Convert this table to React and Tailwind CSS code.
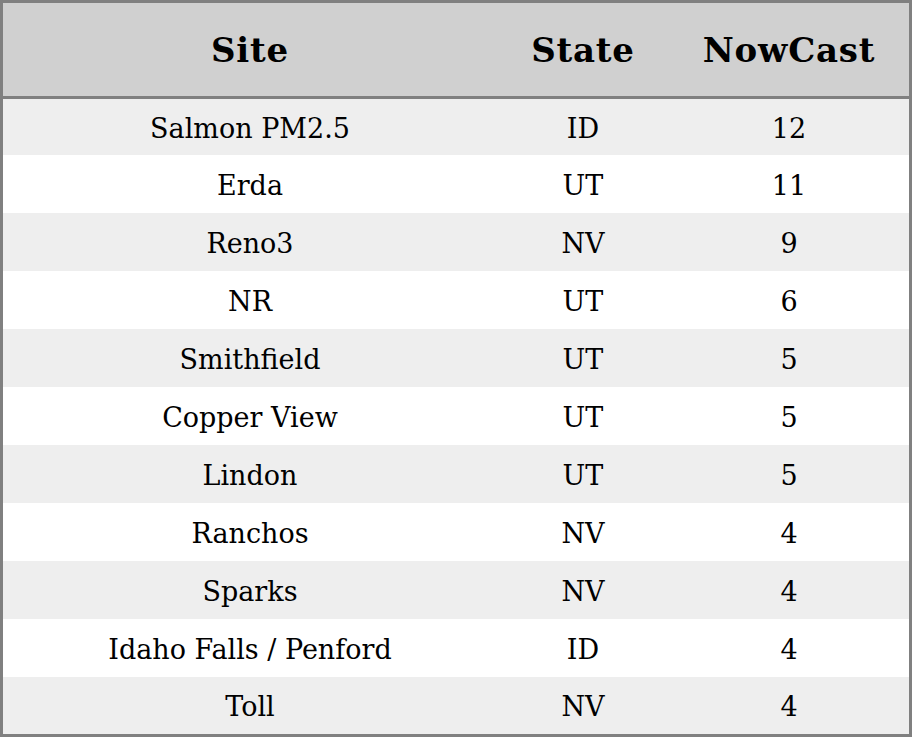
const rows = [
  ["Salmon PM2.5", "ID", "12"],
  ["Erda", "UT", "11"],
  ["Reno3", "NV", "9"],
  ["NR", "UT", "6"],
  ["Smithfield", "UT", "5"],
  ["Copper View", "UT", "5"],
  ["Lindon", "UT", "5"],
  ["Ranchos", "NV", "4"],
  ["Sparks", "NV", "4"],
  ["Idaho Falls / Penford", "ID", "4"],
  ["Toll", "NV", "4"],
];

export default function App() {
  return (
    <div className="w-[912px] h-[737px] bg-white border-[3px] border-[#808080] flex flex-col text-black" style={{ fontFamily: '"DejaVu Serif", serif' }}>
      <div className="h-[93px] shrink-0 grid grid-cols-[494px_172px_1fr] items-center bg-[#d0d0d0] border-b-[3px] border-[#808080] box-content text-[34px] tracking-[0.8px] font-bold leading-none">
        <div className="text-center">Site</div>
        <div className="text-center">State</div>
        <div className="text-center">NowCast</div>
      </div>
      {rows.map((r, i) => (
        <div
          key={i}
          className={
            "grid grid-cols-[494px_172px_1fr] items-center text-[27px] leading-none shrink-0 " +
            (i % 2 === 0 ? "bg-[#eeeeee] " : "bg-white ") +
            (i === 0 ? "h-[56px]" : i === rows.length - 1 ? "h-[57px]" : "h-[58px]")
          }
        >
          <div className="text-center pt-[2px]">{r[0]}</div>
          <div className="text-center pt-[2px]">{r[1]}</div>
          <div className="text-center pt-[2px]">{r[2]}</div>
        </div>
      ))}
    </div>
  );
}
